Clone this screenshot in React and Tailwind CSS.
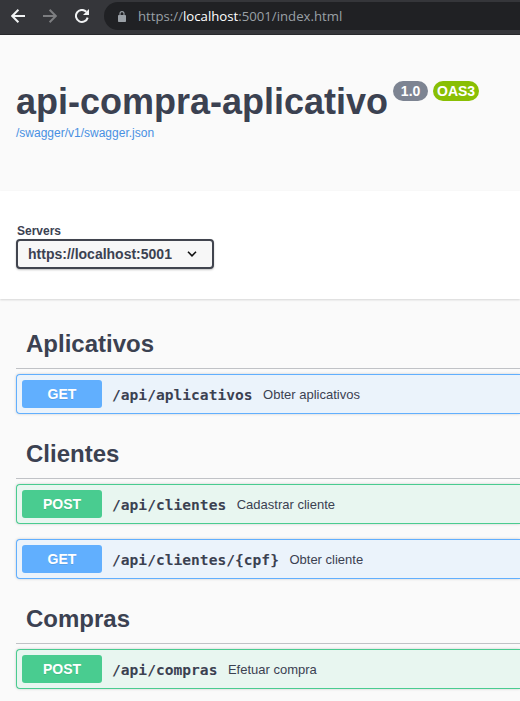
import React from "react";

const sections = [
  {
    tag: "Aplicativos",
    operations: [{ method: "GET", path: "/api/aplicativos", summary: "Obter aplicativos" }],
  },
  {
    tag: "Clientes",
    operations: [
      { method: "POST", path: "/api/clientes", summary: "Cadastrar cliente" },
      { method: "GET", path: "/api/clientes/{cpf}", summary: "Obter cliente" },
    ],
  },
  {
    tag: "Compras",
    operations: [{ method: "POST", path: "/api/compras", summary: "Efetuar compra" }],
  },
];

const tones = {
  GET: { box: "border-[#61affe] bg-[#ebf3fb]", badge: "bg-[#61affe]" },
  POST: { box: "border-[#49cc90] bg-[#e8f6f0]", badge: "bg-[#49cc90]" },
};

function BrowserBar() {
  return (
    <header className="flex h-[35px] items-start border-b border-[#27282b] bg-[#35363a] pl-[11px]">
      <svg className="mt-[9px] h-[14px] w-[14px] shrink-0" viewBox="0 0 14 14" fill="none" stroke="#f1f3f4" strokeWidth="2">
        <path d="M14 7H1.6M7.4 .8 1.2 7l6.2 6.2" />
      </svg>
      <svg className="mt-[9px] ml-[18px] h-[14px] w-[14px] shrink-0" viewBox="0 0 14 14" fill="none" stroke="#7d7e81" strokeWidth="2">
        <path d="M0 7h12.4M6.6 .8 12.8 7l-6.2 6.2" />
      </svg>
      <svg className="mt-[9px] ml-[18px] h-[14px] w-[14px] shrink-0" viewBox="0 0 14 14">
        <path d="M12.7 8.6A6 6 0 1 1 11.3 2.8" fill="none" stroke="#f1f3f4" strokeWidth="2" />
        <path d="M14 0v6H8z" fill="#f1f3f4" />
      </svg>
      <div className="mt-[2px] ml-[15px] flex h-7 flex-1 items-center rounded-l-full bg-[#202124] pl-[14px]">
        <svg className="h-[11px] w-2 shrink-0" viewBox="0 0 8 11">
          <rect y="4" width="8" height="7" rx="0.8" fill="#9aa0a6" />
          <path d="M2 4.5V2.6a2 2 0 0 1 4 0v1.9" fill="none" stroke="#9aa0a6" strokeWidth="1.1" />
        </svg>
        <span className="ml-[12px] whitespace-nowrap font-['Open_Sans','Noto_Sans',sans-serif] text-[13.2px] leading-5 text-[#9aa0a6]">
          https://<span className="text-white">localhost</span>:5001/index.html
        </span>
      </div>
    </header>
  );
}

function Operation({ method, path, summary }) {
  const tone = tones[method];
  return (
    <div
      className={`flex h-10 items-center rounded-l border border-r-0 p-[5px] shadow-[0_0_3px_rgba(0,0,0,0.19)] ${tone.box}`}
    >
      <span
        className={`h-7 w-20 shrink-0 rounded-[3px] text-center text-[14px] leading-7 font-bold text-white [text-shadow:0_1px_0_rgba(0,0,0,0.1)] ${tone.badge}`}
      >
        {method}
      </span>
      <span className="ml-[10px] pt-[2px] font-['DejaVu_Sans_Mono',monospace] text-[14.6px] leading-5 font-bold whitespace-nowrap text-[#3b4151]">
        {path}
      </span>
      <span className="ml-[10.5px] pt-[2px] text-[13px] leading-5 whitespace-nowrap text-[#3b4151]">{summary}</span>
    </div>
  );
}

export default function App() {
  return (
    <div className="flex h-[701px] w-[520px] flex-col overflow-hidden bg-[#fafafa] font-['Liberation_Sans',Arial,sans-serif] text-[#3b4151]">
      <BrowserBar />
      <section className="h-[156px] shrink-0 pt-[45px] pl-4">
        <div className="flex items-start">
          <h1 className="pt-px text-[36px] leading-[42px] font-bold whitespace-nowrap">api-compra-aplicativo</h1>
          <span className="mt-[1px] ml-[5px] h-5 w-[35px] rounded-full bg-[#7d8492] text-center text-[14px] leading-5 font-bold text-white">
            1.0
          </span>
          <span className="mt-[1px] ml-[5px] h-5 w-[46px] rounded-full bg-[#89bf04] text-center text-[14px] leading-5 font-bold text-white">
            OAS3
          </span>
        </div>
        <a className="mt-[2px] block text-[12px] leading-4 text-[#4990e2]">/swagger/v1/swagger.json</a>
      </section>
      <section className="relative h-[108px] shrink-0 bg-white pt-8 pl-4 shadow-[0_1px_2px_rgba(0,0,0,0.15)]">
        <div className="pl-px text-[12px] leading-4 font-bold">Servers</div>
        <div className="flex h-[30px] w-[198px] items-center rounded border-2 border-[#41444e] bg-[#f7f7f7] pr-[15px] pl-[10px] shadow-[0_1px_2px_rgba(0,0,0,0.25)]">
          <span className="flex-1 text-[14px] leading-5 font-bold">https://localhost:5001</span>
          <svg className="h-[6px] w-[10px]" viewBox="0 0 10 6" fill="none" stroke="#111" strokeWidth="1.6">
            <path d="M1 .8 5 4.8 9 .8" />
          </svg>
        </div>
      </section>
      <main className="flex flex-col gap-5 pt-[25px] pl-4">
        {sections.map(({ tag, operations }) => (
          <section key={tag}>
            <h2 className="mb-[5px] h-[45px] border-b border-[#3b4151]/30 pl-[10px] text-[24px] leading-[39px] font-bold">
              {tag}
            </h2>
            <div className="flex flex-col gap-[15px]">
              {operations.map((operation) => (
                <Operation key={operation.path + operation.method} {...operation} />
              ))}
            </div>
          </section>
        ))}
      </main>
    </div>
  );
}
